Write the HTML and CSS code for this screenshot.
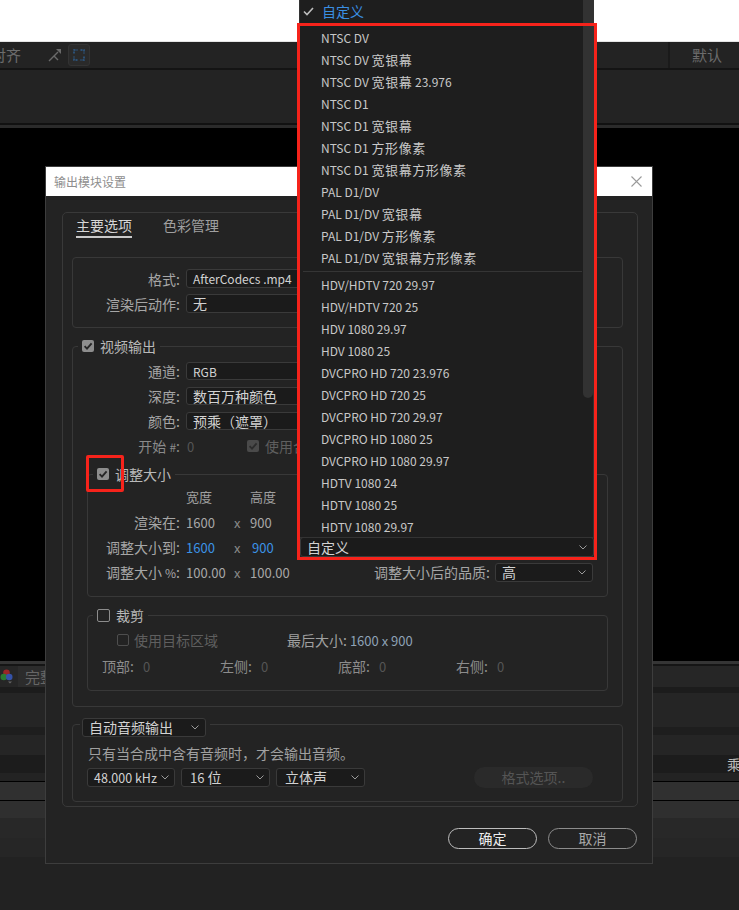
FILE: index.html
```html
<!DOCTYPE html>
<html lang="zh-CN">
<head>
<meta charset="utf-8">
<title>输出模块设置</title>
<link rel="stylesheet" href="styles.css">
</head>
<body>
<div class="app">
  <div class="top-white"></div>
  <div class="toolbar">
    <span class="tb-text tb-align">对齐</span>
    <svg class="tb-arrow" width="14" height="14" viewBox="0 0 14 14"><path d="M1 13 L6 8 L10 12 M6 8 L10 4" fill="none" stroke="#6a6a6a" stroke-width="1.4"/><path d="M8 1 L13 1 L13 6 Z" fill="#6a6a6a"/></svg>
    <span class="tb-btn"><svg width="12" height="12" viewBox="0 0 12 12"><path d="M1 4.5 V1 H4.5 M7.5 1 H11 V4.5 M11 7.5 V11 H7.5 M4.5 11 H1 V7.5" fill="none" stroke="#2d5d8e" stroke-width="1.5" stroke-dasharray="2 1"/></svg></span>
    <div class="tb-right">
      <span class="tb-sep"></span>
      <span class="tb-text">默认</span>
    </div>
  </div>
  <div class="b-sep1"></div>
  <div class="b-panel"></div>
  <div class="b-line"></div>
  <div class="b-line2"></div>
  <div class="viewer"></div>
  <div class="b-strip"></div>
  <div class="b-strip-dark"></div>
  <div class="bottombar">
    <svg class="wheel" width="13" height="15" viewBox="0 0 13 15"><circle cx="6.5" cy="3.8" r="3.3" fill="#9a2626"/><circle cx="3.8" cy="8" r="3.3" fill="#2a7a32"/><circle cx="9.2" cy="8" r="3.3" fill="#3552a8"/><path d="M8 12.5 L12 12.5 L10 14.5 Z" fill="#666"/></svg>
    <span class="bb-tab">完整</span>
  </div>
  <div class="b1"></div>
  <div class="b2"></div>
  <div class="b3"></div>
  <div class="b4"></div>
  <div class="b5"><span>乘</span></div>
  <div class="b6"></div>
  <div class="b7"></div>
  <div class="b8"></div>
  <div class="b9"></div>
  <div class="b10"></div>
  <div class="b11"></div>
  <div class="b12"></div>
  <div class="b13"></div>
</div>

<div class="dialog">
  <div class="dlg-title">
    <span>输出模块设置</span>
    <svg width="11" height="11" viewBox="0 0 11 11"><path d="M0.5 0.5 L10.5 10.5 M10.5 0.5 L0.5 10.5" stroke="#9a9a9a" stroke-width="1.1"/></svg>
  </div>
  <div class="dlg-body">
    <div class="tabpanel">
      <div class="tabs">
        <span class="tab active">主要选项</span>
        <span class="tab">色彩管理</span>
      </div>

      <div class="box format-box">
        <div class="form-grid format-grid">
          <span class="lbl">格式:</span>
          <div class="select"><span class="lat">AfterCodecs .mp4</span></div>
          <span class="lbl">渲染后动作:</span>
          <div class="select">无</div>
        </div>
      </div>

      <div class="group video-group">
        <div class="group-head"><span class="cb checked"><svg viewBox="0 0 12 12"><path d="M2.6 6.2 L5 8.6 L9.6 3.4" fill="none" stroke="#262626" stroke-width="1.9"/></svg></span><span>视频输出</span></div>
        <div class="form-grid video-grid">
          <span class="lbl">通道:</span>
          <div class="select s18"><span class="lat">RGB</span></div>
          <span class="lbl">深度:</span>
          <div class="select s18">数百万种颜色</div>
          <span class="lbl">颜色:</span>
          <div class="select s18">预乘（遮罩）</div>
          <span class="lbl dim">开始 <small>#</small>:</span>
          <div class="start-row">
            <span class="num dimnum">0</span>
            <span class="cb checked disabled"><svg viewBox="0 0 12 12"><path d="M2.6 6.2 L5 8.6 L9.6 3.4" fill="none" stroke="#2c2c2c" stroke-width="1.9"/></svg></span>
            <span class="dimtext">使用合</span>
          </div>
        </div>

        <div class="group sub resize-group">
          <div class="group-head"><span class="cb checked"><svg viewBox="0 0 12 12"><path d="M2.6 6.2 L5 8.6 L9.6 3.4" fill="none" stroke="#262626" stroke-width="1.9"/></svg></span><span>调整大小</span></div>
          <div class="rz-head">
            <span class="rz-h">宽度</span><span class="rz-h">高度</span>
          </div>
          <div class="rz-row">
            <span class="rz-label">渲染在:</span><span class="v1 num">1600</span><span class="vx">x</span><span class="v2 num">900</span>
          </div>
          <div class="rz-row">
            <span class="rz-label">调整大小到:</span><span class="v1 num blue">1600</span><span class="vx">x</span><span class="v2 num blue">900</span>
            <div class="select preset">自定义<svg class="chev" width="8" height="5" viewBox="0 0 8 5"><path d="M0.5 0.5 L4 4 L7.5 0.5" fill="none" stroke="#9a9a9a"/></svg></div>
          </div>
          <div class="rz-row">
            <span class="rz-label">调整大小 <small>%</small>:</span><span class="v1 num">100.00</span><span class="vx">x</span><span class="v2 num">100.00</span>
            <span class="quality-lbl">调整大小后的品质:</span>
            <div class="select quality">高<svg class="chev" width="8" height="5" viewBox="0 0 8 5"><path d="M0.5 0.5 L4 4 L7.5 0.5" fill="none" stroke="#9a9a9a"/></svg></div>
          </div>
        </div>

        <div class="group sub crop-group">
          <div class="group-head"><span class="cb open"></span><span>裁剪</span></div>
          <div class="crop-row1">
            <span class="crop-target"><span class="cb open disabled"></span><span class="dimtext">使用目标区域</span></span>
            <span class="lbl2">最后大小:</span><span class="final">1600 x 900</span>
          </div>
          <div class="crop-row2">
            <span class="crop-item"><span class="lbl3">顶部:</span><span class="num dimnum">0</span></span>
            <span class="crop-item"><span class="lbl3">左侧:</span><span class="num dimnum">0</span></span>
            <span class="crop-item"><span class="lbl3">底部:</span><span class="num dimnum">0</span></span>
            <span class="crop-item"><span class="lbl3">右侧:</span><span class="num dimnum">0</span></span>
          </div>
        </div>
      </div>

      <div class="group audio-group">
        <div class="audio-head">
          <div class="select audio-mode">自动音频输出<svg class="chev" width="8" height="5" viewBox="0 0 8 5"><path d="M0.5 0.5 L4 4 L7.5 0.5" fill="none" stroke="#9a9a9a"/></svg></div>
        </div>
        <div class="audio-note">只有当合成中含有音频时，才会输出音频。</div>
        <div class="audio-row">
          <div class="select a1"><span class="num">48.000 kHz</span><svg class="chev" width="8" height="5" viewBox="0 0 8 5"><path d="M0.5 0.5 L4 4 L7.5 0.5" fill="none" stroke="#9a9a9a"/></svg></div>
          <div class="select a2"><span><span class="num">16</span> 位</span><svg class="chev" width="8" height="5" viewBox="0 0 8 5"><path d="M0.5 0.5 L4 4 L7.5 0.5" fill="none" stroke="#9a9a9a"/></svg></div>
          <div class="select a2">立体声<svg class="chev" width="8" height="5" viewBox="0 0 8 5"><path d="M0.5 0.5 L4 4 L7.5 0.5" fill="none" stroke="#9a9a9a"/></svg></div>
          <span class="fmt-btn">格式选项..</span>
        </div>
      </div>
    </div>

    <div class="dlg-buttons">
      <span class="btn primary">确定</span>
      <span class="btn">取消</span>
    </div>
  </div>
</div>

<div class="popup">
  <div class="pi selected"><svg width="11" height="9" viewBox="0 0 11 9"><path d="M1 4.5 L4 7.5 L10 1" fill="none" stroke="#bdbdbd" stroke-width="1.6"/></svg><span class="cj">自定义</span></div>
  <div class="psep"></div>
  <div class="pi">NTSC DV</div>
  <div class="pi">NTSC DV <span class="cj">宽银幕</span></div>
  <div class="pi">NTSC DV <span class="cj">宽银幕</span> 23.976</div>
  <div class="pi">NTSC D1</div>
  <div class="pi">NTSC D1 <span class="cj">宽银幕</span></div>
  <div class="pi">NTSC D1 <span class="cj">方形像素</span></div>
  <div class="pi">NTSC D1 <span class="cj">宽银幕方形像素</span></div>
  <div class="pi">PAL D1/DV</div>
  <div class="pi">PAL D1/DV <span class="cj">宽银幕</span></div>
  <div class="pi">PAL D1/DV <span class="cj">方形像素</span></div>
  <div class="pi">PAL D1/DV <span class="cj">宽银幕方形像素</span></div>
  <div class="psep"></div>
  <div class="pi">HDV/HDTV 720 29.97</div>
  <div class="pi">HDV/HDTV 720 25</div>
  <div class="pi">HDV 1080 29.97</div>
  <div class="pi">HDV 1080 25</div>
  <div class="pi">DVCPRO HD 720 23.976</div>
  <div class="pi">DVCPRO HD 720 25</div>
  <div class="pi">DVCPRO HD 720 29.97</div>
  <div class="pi">DVCPRO HD 1080 25</div>
  <div class="pi">DVCPRO HD 1080 29.97</div>
  <div class="pi">HDTV 1080 24</div>
  <div class="pi">HDTV 1080 25</div>
  <div class="pi">HDTV 1080 29.97</div>
  <div class="scroll-thumb"></div>
</div>

<div class="annot annot-list"></div>
<div class="annot annot-cb"></div>
</body>
</html>
```

FILE: styles.css
```css
* { box-sizing: border-box; }

body {
  margin: 0;
  width: 739px;
  height: 910px;
  overflow: hidden;
  position: relative;
  background: #222;
  font-family: "Noto Sans CJK SC", "Noto Sans", sans-serif;
}

/* ---------- background application ---------- */
.top-white { height: 42px; background: #fff; border-bottom: 1px solid #e4e4e4; }
.toolbar { height: 26px; background: #232323; display: flex; align-items: center; overflow: hidden; }
.tb-text { font-size: 15px; color: #6c6c6c; line-height: 20px; white-space: nowrap; }
.tb-align { margin-left: -9px; width: 30px; flex: none; }
.tb-arrow { margin-left: 27px; flex: none; }
.tb-btn {
  margin-left: 6px; width: 22px; height: 22px; flex: none;
  background: #2a2a2a; border: 1px solid #333; border-radius: 3px;
  display: flex; align-items: center; justify-content: center;
}
.tb-right { margin-left: auto; margin-right: 17px; display: flex; align-items: center; height: 100%; }
.tb-sep { width: 2px; height: 100%; background: #1a1a1a; margin-right: 22px; }

.b-sep1 { height: 2px; background: #141414; }
.b-panel { height: 53px; background: #232323; }
.b-line { height: 2px; background: #111; }
.b-line2 { height: 3px; background: #2b2b2b; }
.viewer { height: 533px; background: #000; }
.b-strip { height: 3px; background: #353535; }
.b-strip-dark { height: 2px; background: #151515; }
.bottombar { height: 21px; background: #262626; display: flex; align-items: center; }
.wheel { margin-left: 0; flex: none; }
.bb-tab {
  margin-left: 5px; height: 100%; padding-left: 7px; background: #2c2c2c;
  font-size: 15px; line-height: 21px; color: #666; white-space: nowrap;
}
.b1 { height: 6px; background: #1c1c1c; }
.b2 { height: 34px; background: #252525; }
.b3 { height: 8px; background: #1e1e1e; }
.b4 { height: 20px; background: #252525; }
.b5 { height: 18px; background: #1c1c1c; padding-left: 727px; font-size: 14px; line-height: 18px; color: #bdbdbd; white-space: nowrap; overflow: hidden; }
.b6 { height: 8px; background: #232323; }
.b7 { height: 1px; background: #000; }
.b8 { height: 18px; background: #303030; }
.b9 { height: 1px; background: #000; }
.b10 { height: 17px; background: #2f2f2f; }
.b11 { height: 20px; background: #282828; }
.b12 { height: 19px; background: #262626; }
.b13 { height: 53px; background: #222; }

/* ---------- dialog window ---------- */
.dialog {
  position: absolute;
  left: 45px;
  top: 166px;
  width: 608px;
  background: #232323;
  border: 1px solid #3d3d3d;
}
.dlg-title {
  height: 29px; background: #fff;
  display: flex; align-items: center; justify-content: space-between;
  padding: 0 10px 0 8px;
  font-size: 12px; color: #8e8e8e;
}
.dlg-body { padding: 16px 14px 14px 16px; }

.tabpanel { border: 1px solid #393939; border-radius: 5px; padding: 0 14px 4px 9px; }
.tabs { display: flex; margin-left: 4px; padding-top: 2px; }
.tab {
  font-size: 14px; line-height: 20px; color: #a0a0a0;
  padding-bottom: 1px; border-bottom: 2px solid transparent;
}
.tab + .tab { margin-left: 31px; }
.tab.active { color: #d6d6d6; border-bottom-color: #c9c9c9; }

.box { border: 1px solid #383838; border-radius: 4px; }
.format-box { margin-top: 19px; padding: 11px 0 14px; }

.form-grid {
  display: grid;
  grid-template-columns: 107px 340px;
  column-gap: 6px;
  row-gap: 6px;
  align-items: center;
}
.format-grid { grid-auto-rows: 19px; }
.lbl { text-align: right; font-size: 14px; color: #a6a6a6; line-height: 18px; white-space: nowrap; }
.lbl small, .rz-label small { font-size: 12px; line-height: 0; }
.lbl.dim { color: #8a8a8a; }

.select {
  height: 19px;
  background: #1b1b1b;
  border: 1px solid #3a3a3a;
  border-radius: 3px;
  display: flex; align-items: center; justify-content: space-between;
  padding: 0 6px;
  font-size: 14px; line-height: 17px; color: #d2d2d2;
  white-space: nowrap;
}
.select.s18 { height: 18px; }
.select .lat { font-size: 12px; }
.chev { flex: none; }

.num { font-size: 13px; }
.dimnum { color: #555; }
.dimtext { font-size: 14px; color: #5f5f5f; white-space: nowrap; }
.blue { color: #3b93e6 !important; }

.group { border: 1px solid #383838; border-radius: 4px; }
.group-head {
  display: flex; align-items: center; gap: 6px;
  height: 14px; width: max-content;
  margin: -8px 0 0 5px; padding: 0 4px;
  background: #232323;
  font-size: 14px; line-height: 14px; color: #b9b9b9;
}

.cb {
  width: 12px; height: 12px; flex: none; border-radius: 2px;
  display: inline-flex; align-items: center; justify-content: center;
}
.cb svg { width: 12px; height: 12px; }
.cb.checked { background: #8d8d8d; }
.cb.checked.disabled { background: #4a4a4a; }
.cb.open { width: 13px; height: 13px; border: 1.6px solid #8c8c8c; }
.cb.open.disabled { width: 12px; height: 12px; border-color: #4e4e4e; }

.video-group { margin-top: 18px; padding-bottom: 15px; }
.video-grid { margin-top: 9px; row-gap: 7px; grid-auto-rows: 18px; }
.start-row { display: flex; align-items: center; height: 18px; padding-left: 1px; width: 112px; overflow: hidden; }
.start-row .num { width: 60px; flex: none; }
.start-row .dimtext { margin-left: 6px; }

.sub { margin: 19px 14px 0; }
.resize-group { padding-bottom: 14px; }
.rz-head { display: flex; margin-top: 8px; height: 16px; padding-left: 98px; }
.rz-h { width: 64px; font-size: 13px; line-height: 16px; color: #a0a0a0; }
.rz-row { display: flex; align-items: center; height: 20px; margin-top: 5px; }
.rz-head + .rz-row { margin-top: 7px; }
.rz-label { width: 92px; margin-right: 6px; text-align: right; font-size: 14px; line-height: 20px; color: #a6a6a6; white-space: nowrap; }
.v1 { width: 48px; color: #a8a8a8; }
.vx { width: 16px; font-size: 13px; color: #8a8a8a; }
.v2 { width: 50px; color: #a8a8a8; }
.rz-row .v1.blue + .vx + .v2 { padding-left: 2px; }
.select.preset { margin-left: auto; margin-right: 13px; width: 294px; height: 20px; }
.quality-lbl { margin-left: auto; margin-right: 5px; font-size: 14px; color: #a6a6a6; white-space: nowrap; }
.select.quality { margin-right: 14px; width: 98px; height: 19px; }

.crop-group { margin-top: 18px; padding-bottom: 15px; }
.crop-row1 { display: flex; align-items: center; height: 18px; margin-top: 9px; padding-left: 29px; }
.crop-target { display: flex; align-items: center; gap: 5px; width: 170px; }
.lbl2 { font-size: 14px; color: #a0a0a0; white-space: nowrap; }
.final { margin-left: 3px; font-size: 13px; color: #8ea2b6; white-space: nowrap; }
.crop-row2 { display: flex; align-items: center; height: 18px; margin-top: 8px; padding-left: 14px; }
.crop-item { display: flex; align-items: center; width: 118px; }
.lbl3 { font-size: 14px; color: #8c8c8c; margin-right: 9px; white-space: nowrap; }

.audio-group { margin-top: 17px; padding-bottom: 13px; }
.audio-head { width: max-content; margin: -7px 0 0 7px; padding: 0 4px 0 2px; background: #232323; }
.select.audio-mode { width: 124px; }
.audio-note { margin-top: 7px; padding-left: 15px; font-size: 14px; line-height: 18px; color: #a0a0a0; white-space: nowrap; }
.audio-row { display: flex; align-items: center; gap: 6px; height: 21px; margin-top: 5px; padding-left: 14px; }
.select.a1 { width: 88px; padding: 0 5px 0 6px; }
.select.a1 .num { font-size: 12.5px; }
.select.a2 { width: 89px; padding: 0 5px 0 8px; }
.fmt-btn {
  margin-left: auto; margin-right: 29px;
  width: 119px; height: 21px; border-radius: 11px;
  background: #2a2a2a; color: #555;
  font-size: 14px; line-height: 21px; text-align: center;
}

.dlg-buttons { display: flex; justify-content: flex-end; gap: 11px; margin-top: 21px; margin-right: 1px; }
.btn {
  width: 89px; height: 21px; border-radius: 11px;
  border: 1.5px solid #8c8c8c;
  font-size: 14px; line-height: 18px; text-align: center; color: #a8a8a8;
}
.btn.primary { border-color: #bdbdbd; color: #eeeeee; }

/* ---------- open dropdown list ---------- */
.popup {
  position: absolute;
  left: 299px;
  top: 0;
  width: 295px;
  height: 538px;
  background: #1e1e1e;
  border: 1px solid #333;
  border-top: none;
  font-size: 12px;
  color: #c8c8c8;
}
.pi { height: 22px; line-height: 22px; padding-left: 21px; white-space: nowrap; }
.pi.selected { display: flex; align-items: center; padding-left: 3px; gap: 8px; color: #3a8fe3; }
.pi.selected .cj { font-size: 14px; letter-spacing: 0; }
.cj { font-size: 13px; letter-spacing: 0.6px; }
.psep { height: 5px; padding: 2px 11px 2px 3px; }
.psep::before { content: ""; display: block; height: 1px; background: #353535; }
.scroll-thumb {
  position: absolute;
  left: 283px;
  top: 0;
  width: 10px;
  height: 398px;
  background: #323232;
  border-radius: 0 0 5px 5px;
}

/* ---------- red annotation frames ---------- */
.annot { position: absolute; border: 3px solid #f6231b; }
.annot-list { left: 297px; top: 23px; width: 300px; height: 537px; }
.annot-cb { left: 86px; top: 455px; width: 38px; height: 37px; border-radius: 2px; }
```
